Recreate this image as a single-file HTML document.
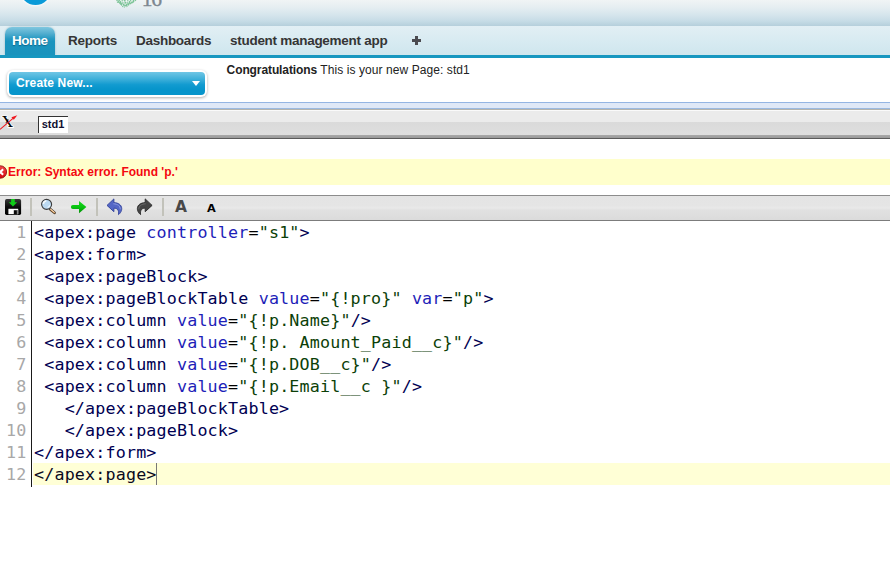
<!DOCTYPE html>
<html lang="en">
<head>
<meta charset="utf-8">
<title>Visualforce Page: std1</title>
<style>
html,body{margin:0;padding:0;}
body{width:890px;height:564px;overflow:hidden;background:#fff;position:relative;font-family:"Liberation Sans",Arial,sans-serif;font-size:12px;color:#222;}
.abs{position:absolute;}
/* header */
#hdr{left:0;top:0;width:890px;height:26px;background:linear-gradient(to bottom,#f0f4f5 0px,#e4edf1 8px,#d5e5ec 15px,#c6dce6 21px,#b5cfdb 26px);}
#logo{left:19.5px;top:-26.35px;width:31.2px;height:31.2px;border-radius:50%;background:#0a9ad8;box-shadow:0 0 2px 1px rgba(255,255,255,.8);}
#yr{left:141.8px;top:-12px;font-family:"Liberation Serif",serif;font-size:21.500px;line-height:22px;color:#7d8790;-webkit-text-stroke:.35px #7d8790;letter-spacing:-1.3px;}
/* tab bar */
#tabbar{left:0;top:26px;width:890px;height:29px;background:linear-gradient(to bottom,#e2eff4 0,#d6eaf1 60%,#cfe6ee 100%);}
#tabline{left:0;top:55px;width:890px;height:3px;background:#1797c0;}
#home{left:5px;top:27px;width:50px;height:28px;border-radius:7px 7px 0 0;background:linear-gradient(to bottom,#80c7df 0,#55afd0 22%,#2599c2 42%,#1a94be 52%,#1a93bd 100%);box-shadow:0 0 2px rgba(60,110,130,.45);}
.tab{top:33px;height:16px;line-height:16px;font-size:13.5px;letter-spacing:-0.28px;font-weight:bold;color:#353535;white-space:nowrap;}
#t-home{left:12px;letter-spacing:-0.5px;color:#fff;text-shadow:0 1px 1px rgba(0,60,90,.5);}
/* create new */
#cn-out{left:7px;top:70px;width:200px;height:27px;border-radius:6px;background:#fff;box-shadow:0 1px 3px rgba(0,0,0,.32);}
#cn{left:9px;top:72px;width:196px;height:23px;border-radius:4px;background:linear-gradient(to bottom,#70c6e5 0,#3fb0da 30%,#129bd0 55%,#0795cb 75%,#0795cb 100%);}
#cn-t{left:16px;top:75px;font-size:12px;font-weight:bold;line-height:16px;color:#fff;white-space:nowrap;letter-spacing:.13px;}
#cn-a{left:192px;top:81px;width:0;height:0;border-left:4px solid transparent;border-right:4px solid transparent;border-top:5px solid #fff;}
#congr{left:226.600px;top:62px;font-size:12px;line-height:16px;color:#222;white-space:nowrap;letter-spacing:.08px;}
/* dev bar */
#db1{left:0;top:102px;width:890px;height:1px;background:#94b5e3;}
#db2{left:0;top:103px;width:890px;height:5px;background:#dfe8f7;}
#db3{left:0;top:108px;width:890px;height:1px;background:#9bb9e0;}
#db4{left:0;top:109px;width:890px;height:1px;background:#b4b4ae;}
#db5{left:0;top:110px;width:890px;height:1px;background:#fafafa;}
#db6{left:0;top:111px;width:890px;height:11px;background:#ebebeb;}
#db7{left:0;top:122px;width:890px;height:13px;background:linear-gradient(to bottom,#dadada,#dedede);}
#db8{left:0;top:135px;width:890px;height:3px;background:linear-gradient(to bottom,#a8a8a8,#9a9a9a);}
#db9{left:0;top:138px;width:890px;height:1px;background:#5a5a5a;}
#stdbox{left:38px;top:116px;width:29px;height:16px;background:#fff;border-top:1px solid #333;border-left:1px solid #333;}
#stdtxt{left:41.700px;top:117px;font-size:11px;font-weight:bold;line-height:15px;color:#101030;}
/* error */
#err{left:0;top:159px;width:890px;height:26px;background:#ffffcc;}
#errt{left:8px;top:164px;font-size:12px;font-weight:bold;line-height:16px;color:#f40810;white-space:nowrap;}
/* toolbar */
#tb{left:0;top:195px;width:890px;height:26px;border-top:1px solid #8c8c8c;border-bottom:1px solid #7c7c7c;box-sizing:border-box;background:linear-gradient(to bottom,#e4e4e4 0,#e5e5e5 40%,#e9e9e9 50%,#e1e1e1 58%,#dbdbdb 100%);}
.sep{top:198px;width:2px;height:18px;background:#c2c2ba;}
/* code */
#gline{left:31px;top:221px;width:1px;height:266px;background:#1a1a1a;}
#hl{left:33px;top:463px;width:857px;height:22px;background:#ffffd6;}
#cursor{left:156px;top:463px;width:1px;height:22px;background:#777;}
.ln,.cl{font-family:"DejaVu Sans Mono","Liberation Mono",monospace;font-size:16.7px;letter-spacing:0.166px;line-height:22px;height:22px;white-space:pre;}
.ln{left:0;width:26.5px;text-align:right;color:#a8a8a8;}
.cl{left:34px;color:#000052;}
.an{color:#1e1eb8;}
.pu{color:#000;}
.st{color:#0c3f08;}
</style>
</head>
<body>
<div class="abs" id="hdr"></div>
<div class="abs" id="logo"></div>
<svg class="abs" style="left:114px;top:0" width="24" height="9" viewBox="0 0 24 9">
 <g stroke="#5fb87e" stroke-width="1.100" fill="none" opacity=".8" stroke-dasharray="1.5 .8">
  <path d="M2.500 0l5.500 5.500M5 0l4 7M8 0l2.500 7.500M11 0l0 7M14 0l-2 7M17 0l-4 6.500M20 0l-5.500 5M22 0l-4 3"/>
  <path d="M3 2l4 1.500M6 1l3 3.500M16 1l-3 4M19 2l-4 2M10 0l3 5M7 3l5 3M17 3l-5 3M4 .5l3 4M20 1l-4 3"/>
 </g>
</svg>
<div class="abs" id="yr">16</div>
<div class="abs" id="tabbar"></div>
<div class="abs" id="home"></div>
<div class="abs" id="tabline"></div>
<div class="abs tab" id="t-home">Home</div>
<div class="abs tab" style="left:68px">Reports</div>
<div class="abs tab" style="left:136px">Dashboards</div>
<div class="abs tab" style="left:230px">student management app</div>
<svg class="abs" style="left:411px;top:36px" width="11" height="10" viewBox="0 0 11 10"><path d="M4 0h3v3h3v3H7v3H4V6H1V3h3z" fill="#4b4b50"/></svg>

<div class="abs" id="cn-out"></div>
<div class="abs" id="cn"></div>
<div class="abs" id="cn-t">Create New...</div>
<div class="abs" id="cn-a"></div>
<div class="abs" id="congr"><b style="letter-spacing:-.1px">Congratulations</b> This is your new Page: std1</div>

<div class="abs" id="db1"></div><div class="abs" id="db2"></div><div class="abs" id="db3"></div>
<div class="abs" id="db4"></div><div class="abs" id="db5"></div><div class="abs" id="db6"></div>
<div class="abs" id="db7"></div><div class="abs" id="db8"></div><div class="abs" id="db9"></div>
<svg class="abs" style="left:0;top:113px" width="20" height="18" viewBox="0 0 20 18">
 <defs><clipPath id="xc"><path d="M0 2.500H7.600V5.200L12.200 12.300H14.500V15H6.900V12.300L3 5.200H0z"/></clipPath></defs>
 <g clip-path="url(#xc)">
  <text x="1.500" y="13.800" font-family="Liberation Serif, serif" font-size="16" fill="#fff" stroke="#fff" stroke-width="2.200" stroke-linejoin="round">X</text>
  <text x="1.500" y="13.800" font-family="Liberation Serif, serif" font-size="16" fill="#000" stroke="#000" stroke-width=".15">X</text>
 </g>
 <path d="M0 16.400L13 5.300" stroke="#f01820" stroke-width="1.100" fill="none"/>
 <path d="M17.300 2.300l-5.900 2 2.400 2.500z" fill="#f01820"/>
</svg>
<div class="abs" id="stdbox"></div>
<div class="abs" id="stdtxt">std1</div>

<div class="abs" id="err"></div>
<svg class="abs" style="left:0;top:165px" width="9" height="14" viewBox="0 0 9 14">
 <defs><linearGradient id="eg" x1="0" y1="0" x2="0" y2="1"><stop offset="0" stop-color="#f2474a"/><stop offset="1" stop-color="#d40a10"/></linearGradient></defs>
 <circle cx=".4" cy="7" r="6.200" fill="url(#eg)" stroke="#8e1414" stroke-width=".9"/>
 <path d="M-2.300 4.300l5.400 5.400M3.100 4.300l-5.400 5.400" stroke="#fff" stroke-width="2.100"/>
</svg>
<div class="abs" id="errt">Error: Syntax error. Found 'p.'</div>

<div class="abs" id="tb"></div>
<!-- save -->
<svg class="abs" style="left:5px;top:199px" width="17" height="17" viewBox="0 0 17 17">
 <defs><linearGradient id="sg" x1="0" y1="0" x2="0" y2="1"><stop offset="0" stop-color="#3a3a3a"/><stop offset=".5" stop-color="#0c0c0c"/><stop offset="1" stop-color="#000"/></linearGradient></defs>
 <rect x="0" y="0" width="16.100" height="16" rx="1.700" fill="url(#sg)"/>
 <rect x="3.400" y="9.800" width="9.800" height="5.400" fill="#fff"/>
 <rect x="11.900" y="11" width="1.400" height="4.200" fill="#8a8a8a"/>
 <rect x="8.800" y="11.200" width="3.100" height="4" fill="#0a0a0a"/>
 <path d="M6.100 0h3.700v3.200h2.400L7.950 7.400 3.700 3.200h2.400z" fill="#10cc18"/>
</svg>
<div class="abs sep" style="left:30px"></div>
<!-- magnifier -->
<svg class="abs" style="left:39px;top:197px" width="19" height="19" viewBox="0 0 19 19">
 <path d="M11.400 12.400l4.100 3.400" stroke="#4a3a2a" stroke-width="2.700" stroke-linecap="round"/>
 <path d="M11.700 12.500l3.600 3" stroke="#e8a860" stroke-width="1.300" stroke-linecap="round"/>
 <path d="M11.500 12l3.600 3" stroke="#fff" stroke-width=".6" stroke-linecap="round"/>
 <circle cx="7.600" cy="7.350" r="5" fill="#bcdaf2" stroke="#3c3c3c" stroke-width="1.100"/>
 <path d="M4.300 6.800a3.500 3.500 0 0 1 3-3.100" stroke="#fff" stroke-width="1.600" fill="none" opacity=".9"/>
 <path d="M8.500 10.500a3.500 3.500 0 0 0 2.400-2.300" stroke="#e8f3fc" stroke-width="1.200" fill="none"/>
</svg>
<!-- green arrow -->
<svg class="abs" style="left:70px;top:200px" width="17" height="14" viewBox="0 0 17 14">
 <defs><linearGradient id="gg" x1="0" y1="0" x2="0" y2="1"><stop offset="0" stop-color="#18d820"/><stop offset=".5" stop-color="#08c410"/><stop offset="1" stop-color="#048c08"/></linearGradient></defs>
 <path d="M2.900 5h6.100V.9l7.400 6.100-7.400 6.300V9H2.900a2 2 0 0 1 0-4z" fill="url(#gg)"/>
</svg>
<div class="abs sep" style="left:96px"></div>
<!-- undo -->
<svg class="abs" style="left:106px;top:198px" width="18" height="18" viewBox="0 0 18 18">
 <path d="M7.900.9L1 7.400l6.900 6.300v-3.500c2.900-.2 5.300 1.500 4.600 6.400 4.600-3.200 5.300-11.400-4.600-12z" fill="#5466c6" stroke="#2f3f98" stroke-width=".9" stroke-linejoin="round"/>
 <path d="M7.400 5.800c4.300.2 6.800 2 6.900 5.500" stroke="#8c9ae0" stroke-width="1" fill="none"/>
</svg>
<!-- redo -->
<svg class="abs" style="left:135px;top:198px" width="18" height="18" viewBox="0 0 18 18">
 <path d="M10.200.9l6.900 6.500-6.900 6.300v-3.500c-2.900-.2-5.300 1.500-4.600 6.400C1 13.400.3 5.200 10.200 4.600z" fill="#444" stroke="#2a2a2a" stroke-width=".9" stroke-linejoin="round"/>
 <path d="M10.700 5.800c-4.300.2-6.800 2-6.900 5.500" stroke="#6c6c6c" stroke-width="1" fill="none"/>
</svg>
<div class="abs sep" style="left:162px"></div>
<div class="abs" style="left:174.900px;top:196.500px;font-family:'DejaVu Sans','Liberation Sans',sans-serif;font-size:15.500px;line-height:20px;font-weight:bold;color:#484848">A</div>
<div class="abs" style="left:207px;top:200px;font-family:'DejaVu Sans','Liberation Sans',sans-serif;font-size:11.300px;line-height:18px;font-weight:bold;color:#000">A</div>

<div class="abs" id="hl"></div>
<div class="abs" id="gline"></div>
<div class="abs" id="cursor"></div>

<div class="abs ln" style="top:221px">1</div>
<div class="abs ln" style="top:243px">2</div>
<div class="abs ln" style="top:265px">3</div>
<div class="abs ln" style="top:287px">4</div>
<div class="abs ln" style="top:309px">5</div>
<div class="abs ln" style="top:331px">6</div>
<div class="abs ln" style="top:353px">7</div>
<div class="abs ln" style="top:375px">8</div>
<div class="abs ln" style="top:397px">9</div>
<div class="abs ln" style="top:419px">10</div>
<div class="abs ln" style="top:441px">11</div>
<div class="abs ln" style="top:463px">12</div>

<div class="abs cl" style="top:221px">&lt;apex:page <span class="an">controller</span><span class="pu">=</span><span class="st">"s1"</span>&gt;</div>
<div class="abs cl" style="top:243px">&lt;apex:form&gt;</div>
<div class="abs cl" style="top:265px"> &lt;apex:pageBlock&gt;</div>
<div class="abs cl" style="top:287px"> &lt;apex:pageBlockTable <span class="an">value</span><span class="pu">=</span><span class="st">"{!pro}"</span> <span class="an">var</span><span class="pu">=</span><span class="st">"p"</span>&gt;</div>
<div class="abs cl" style="top:309px"> &lt;apex:column <span class="an">value</span><span class="pu">=</span><span class="st">"{!p.Name}"</span>/&gt;</div>
<div class="abs cl" style="top:331px"> &lt;apex:column <span class="an">value</span><span class="pu">=</span><span class="st">"{!p. Amount_Paid__c}"</span>/&gt;</div>
<div class="abs cl" style="top:353px"> &lt;apex:column <span class="an">value</span><span class="pu">=</span><span class="st">"{!p.DOB__c}"</span>/&gt;</div>
<div class="abs cl" style="top:375px"> &lt;apex:column <span class="an">value</span><span class="pu">=</span><span class="st">"{!p.Email__c }"</span>/&gt;</div>
<div class="abs cl" style="top:397px">   &lt;/apex:pageBlockTable&gt;</div>
<div class="abs cl" style="top:419px">   &lt;/apex:pageBlock&gt;</div>
<div class="abs cl" style="top:441px">&lt;/apex:form&gt;</div>
<div class="abs cl" style="top:463px;color:#0a0a1e">&lt;/apex:page&gt;</div>
</body>
</html>
